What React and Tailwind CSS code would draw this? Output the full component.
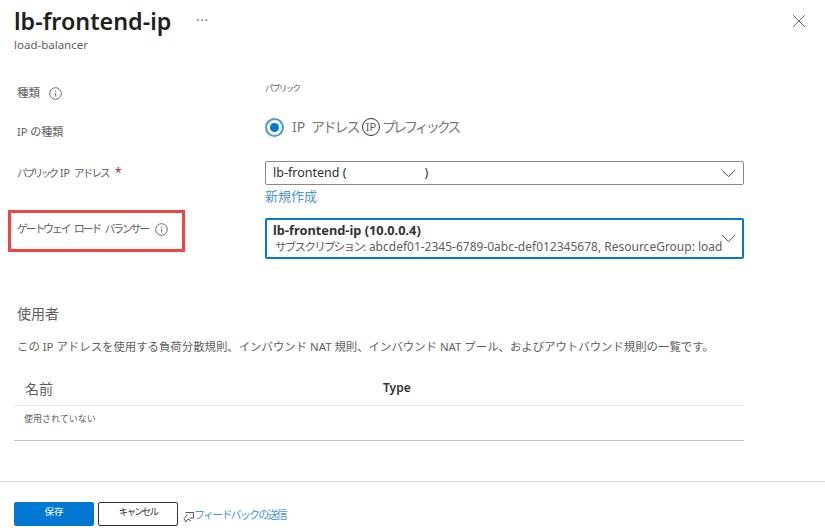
import { ChevronDown, X } from 'lucide-react'

const jp = "font-['Noto_Sans','Noto_Sans_CJK_JP',sans-serif]"

function Info() {
  return (
    <svg width="13" height="13" viewBox="0 0 13 13" fill="none" className="shrink-0">
      <circle cx="6.5" cy="6.5" r="5.8" stroke="#6b6b6b" strokeWidth="1" />
      <rect x="6" y="5.5" width="1.2" height="4" fill="#8a8a8a" />
      <rect x="6" y="3.4" width="1.2" height="1.2" fill="#8a8a8a" />
    </svg>
  )
}

function Row({ className, label, children }) {
  return (
    <div className={`flex ${className}`}>
      <div className="w-[251px] shrink-0">{label}</div>
      <div className="w-[479px]">{children}</div>
    </div>
  )
}

export default function App() {
  return (
    <div className={`w-[825px] h-[532px] overflow-hidden bg-white text-[#323130] ${jp}`}>
      {/* Header */}
      <div className="flex items-start justify-between h-[72px] pl-[14px] pr-[15px]">
        <div>
          <div className="flex items-center h-[41px]">
            <h1 className="text-[23.3px] leading-[32px] font-semibold text-[#201f1e]">lb-frontend-ip</h1>
            <span className="ml-[25px] text-[12px] leading-none tracking-[1px] text-[#605e5c]">···</span>
          </div>
          <div className="text-[11.5px] leading-[14px] -mt-[3px] text-[#605e5c]">load-balancer</div>
        </div>
        <X size={22} strokeWidth={0.9} color="#444" className="mt-[10px]" />
      </div>

      {/* Form */}
      <div className="pl-[14px]">
        <Row
          className="h-[42px]"
          label={
            <div className="flex items-center gap-[9px] pl-[3px] pt-[12px] text-[11.5px] leading-[18px] text-[#605e5c]">
              種類 <Info />
            </div>
          }
        >
          <div className="pt-[9px] text-[8.5px] leading-[14px] tracking-[-1.6px] text-[#605e5c]">パブリック</div>
        </Row>

        <Row
          className="h-[47px]"
          label={<div className="pl-[3px] pt-[9px] text-[11px] leading-[18px] text-[#605e5c]">IP の種類</div>}
        >
          <div className="flex items-center pt-[3px] text-[14px] leading-[20px] text-[#777]">
            <span className="flex items-center justify-center size-[19px] rounded-full border-2 border-[#4a9ae0]">
              <span className="size-[9px] rounded-full bg-[#0078d4]" />
            </span>
            <span className="ml-[8px] w-[19px]">IP</span>
            <span className="w-[51px] tracking-[-2.2px] whitespace-nowrap">アドレス</span>
            <span className="flex items-center justify-center size-[18px] rounded-full border border-[#333] text-[11px] text-[#555]">IP</span>
            <span className="ml-[2px] tracking-[-3px]">プレフィックス</span>
          </div>
        </Row>

        <Row
          className="h-[49px]"
          label={
            <div className="flex items-center pl-[3px] pt-[3px] text-[10.5px] leading-[18px] text-[#605e5c]">
              <span className="w-[43px] tracking-[-2.6px] whitespace-nowrap">パブリック</span>
              <span className="w-[14px]">IP</span>
              <span className="w-[41px] tracking-[-1.8px] whitespace-nowrap">アドレス</span>
              <span className="text-[12px] text-[#a4262c]">*</span>
            </div>
          }
        >
          <div className="flex items-center justify-between h-[24px] pl-[7px] pr-[2px] border border-[#8a8886] rounded-[2px] text-[12.5px] text-[#323130]">
            <span>lb-frontend (<span className="inline-block w-[78px]" />)</span>
            <ChevronDown size={25} strokeWidth={0.9} color="#444" />
          </div>
          <a className="block mt-[2px] text-[13px] leading-[18px] text-[#4a94d8]">新規作成</a>
        </Row>

        <Row
          className="h-[82px]"
          label={
            <div className="flex items-center gap-[5px] w-[177px] h-[42px] -ml-[6px] pl-[6px] pb-[3px] border-[3px] border-[#f04444] text-[11px] text-[#605e5c] whitespace-nowrap">
              <span className="w-[133px] tracking-[-2.3px] [word-spacing:4px]">ゲートウェイ ロード バランサー</span> <Info />
            </div>
          }
        >
          <div className="relative h-[41px] mt-[8px] pl-[6px] pt-[2px] border-2 border-[#0078d4] rounded-[2px] overflow-hidden whitespace-nowrap">
            <div className="text-[12.8px] leading-[17px] font-bold text-[#323130]">lb-frontend-ip (10.0.0.4)</div>
            <div className="pl-[2px] text-[12px] leading-[16px] text-[#605e5c]">
              <span className="text-[11.5px] tracking-[-1.7px]">サブスクリプション: </span>
              <span className="ml-[3px]">abcdef01-2345-6789-0abc-def012345678, ResourceGroup: load</span>
            </div>
            <ChevronDown size={25} strokeWidth={0.9} color="#444" className="absolute right-[1px] top-[6px]" />
          </div>
        </Row>

        {/* Usage */}
        <div className="pl-[3px] pt-[12px] text-[14px] leading-[20px] text-[#605e5c]">使用者</div>
        <div className="pl-[3px] mt-[14px] text-[11.4px] leading-[18px] text-[#605e5c]">
          この IP アドレスを使用する負荷分散規則、インバウンド NAT 規則、インバウンド NAT プール、およびアウトバウンド規則の一覧です。
        </div>

        <div className="w-[730px] mt-[15px]">
          <div className="flex items-center h-[35px] border-b border-[#e6e6e6]">
            <div className="w-[369px] pl-[11px] text-[14px] text-[#605e5c]">名前</div>
            <div className="text-[12px] font-semibold text-[#323130]">Type</div>
          </div>
          <div className="h-[35px] pl-[10px] pt-[5px] border-b border-[#c8c6c4] text-[9px] leading-[16px] text-[#605e5c]">使用されていない</div>
        </div>
      </div>

      {/* Footer */}
      <div className="flex items-center mt-[40px] h-[51px] pt-[13px] pl-[14px] gap-[4px] border-t border-[#e1dfdd]">
        <button className="w-[80px] h-[24px] pb-[2px] rounded-[2px] bg-[#0078d4] text-white text-[9.5px]">保存</button>
        <button className="w-[80px] h-[24px] pb-[2px] rounded-[2px] border border-[#323130] bg-white text-[#323130] text-[9.5px] tracking-[-1.8px]">キャンセル</button>
        <a className="flex items-center ml-[1px] mt-[3px] text-[11px] tracking-[-1.8px] text-[#4a94d8]">
          <svg width="11" height="12" viewBox="0 0 11 12" fill="none" stroke="#555" strokeWidth="1" className="mt-[3px]">
            <path d="M2.5 1.5h8v5.5h-4" />
            <path d="M4.5 3.5 L1 7.5 L3 11 L5 8 L8 10" />
          </svg>
          フィードバックの送信
        </a>
      </div>
    </div>
  )
}
